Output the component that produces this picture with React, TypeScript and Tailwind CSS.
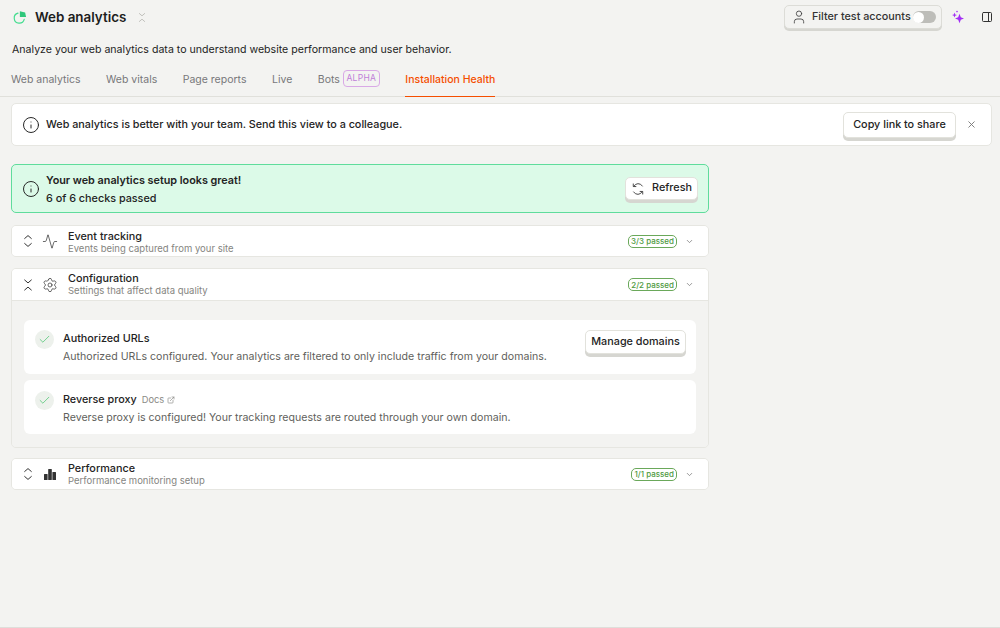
import { ExternalLink, Info, Settings, X, Check, ChevronDown, User, PanelRight, Activity } from "lucide-react";
import type { ReactNode } from "react";

const Chevrons = ({ open = false, className = "" }: { open?: boolean; className?: string }) => (
  <svg viewBox="0 0 12 16" className={className} fill="none" stroke="currentColor" strokeWidth="1.2" strokeLinecap="round" strokeLinejoin="round">
    {open ? (
      <>
        <path d="M2 2 6 5.5 10 2" />
        <path d="M2 14 6 10.5 10 14" />
      </>
    ) : (
      <>
        <path d="M2 5 6 1.5 10 5" />
        <path d="M2 11 6 14.5 10 11" />
      </>
    )}
  </svg>
);

const Logo = () => (
  <svg viewBox="0 0 16 16" className="w-[15px] h-[15px]" fill="none">
    <path d="M6.4 3.4A5.4 5.4 0 1 0 13 10" stroke="#45dd90" strokeWidth="1.3" strokeLinecap="round" />
    <path d="M8.4 1.4l5.6 1.2 1 4.8H8.4z" fill="#2fc77b" />
  </svg>
);

const Spark = () => (
  <svg viewBox="0 0 14 14" className="w-[14px] h-[14px]" fill="#a32ef5">
    <path d="M8.5 3.8 9.8 7.2 13 8.5 9.8 9.8 8.5 13.2 7.2 9.8 4 8.5 7.2 7.2z" />
    <path d="M3.5 2.6 4.2 4.4 6 5 4.2 5.7 3.5 7.4 2.8 5.7 1 5 2.8 4.4z" />
    <circle cx="6" cy="1.6" r="0.8" />
  </svg>
);

const Refresh = () => (
  <svg viewBox="0 0 16 16" className="w-[14px] h-[14px] text-[#444]" fill="none" stroke="currentColor" strokeWidth="1.1" strokeLinecap="round" strokeLinejoin="round">
    <path d="M3.2 5A5.6 5.6 0 0 1 13 4.6" />
    <path d="M12.8 11A5.6 5.6 0 0 1 3 11.4" />
    <path d="M2.6 2.2V5.2H5.6" />
    <path d="M13.4 13.8V10.8H10.4" />
  </svg>
);

const Bars = () => (
  <svg viewBox="0 0 14 14" className="w-[14px] h-[14px]" fill="#333">
    <rect x="1" y="7" width="3.6" height="6" rx="0.6" />
    <rect x="5.2" y="2" width="3.6" height="11" rx="0.6" />
    <rect x="9.4" y="5" width="3.6" height="8" rx="0.6" />
  </svg>
);

const SoftButton = ({ children, className = "" }: { children: ReactNode; className?: string }) => (
  <button className={"flex items-center justify-center bg-white rounded-[5px] border border-[#e2e2dc] shadow-[0_3px_0_#d6d6d1] text-[10.8px] font-medium text-[#232323] whitespace-nowrap " + className}>
    {children}
  </button>
);

const CheckDot = () => (
  <span className="w-[19px] h-[19px] shrink-0 rounded-full bg-[#edf1ec] flex items-center justify-center">
    <Check className="w-[13px] h-[13px] text-[#3fc267]" strokeWidth={1.3} />
  </span>
);

const Section = ({ icon, title, sub, passed, open, nudge, children }: { icon: ReactNode; title: string; sub: string; passed: string; open?: boolean; nudge?: boolean; children?: ReactNode }) => (
  <div className="rounded-[5px] border border-[#e6e6e1] overflow-hidden">
    <div className={open ? "flex items-center h-[32px] bg-white pl-[11px] pr-[14px] border-b border-[#e6e6e1]" : "flex items-center h-[30px] bg-white pl-[11px] pr-[14px]"}>
      <Chevrons open={open} className="w-[10px] h-[16px] text-[#333]" />
      <span className="w-[16px] flex justify-center ml-[9px] text-[#333]">{icon}</span>
      <div className={nudge ? "ml-[10px] pt-[2px] flex-1 flex flex-col" : open ? "ml-[10px] pb-[1px] flex-1 flex flex-col" : "ml-[10px] flex-1 flex flex-col"}>
        <span className="text-[10.8px] leading-[13px] font-medium text-[#232323]">{title}</span>
        <span className="text-[9.5px] leading-[11px] text-[#85857f]">{sub}</span>
      </div>
      <span className="border border-[#6aa85a] rounded-[5px] px-[2px] h-[13px] flex items-center text-[8px] font-medium text-[#4f9a42] whitespace-nowrap">{passed}</span>
      <ChevronDown className="w-[9px] h-[9px] ml-[8px] text-[#777]" />
    </div>
    {children}
  </div>
);

export default function App() {
  return (
    <div className="w-[1000px] h-[628px] overflow-hidden bg-[#f3f3f1] font-['Inter',sans-serif] text-[#232323] border-b border-[#dededa]">
      <div className="flex items-center h-[34px] pl-[12px] pr-[7px]">
        <Logo />
        <span className="ml-[8px] text-[13.4px] font-semibold text-[#1d1d1d]">Web analytics</span>
        <Chevrons open className="ml-[12px] w-[8px] h-[11px] text-[#b5b5b0]" />
        <div className="flex-1" />
        <div className="flex items-center h-[24px] w-[158px] pl-[6px] bg-[#f3f3f1] rounded-[5px] border border-[#dcdcd7] shadow-[0_2px_0_#d6d6d1]">
          <User className="w-[16px] h-[16px] text-[#444]" strokeWidth={1.3} />
          <span className="ml-[5px] pt-[1px] text-[10.8px] font-medium text-[#333] whitespace-nowrap">Filter test accounts</span>
          <span className="ml-[2px] w-[23px] h-[12px] rounded-full bg-[#bdbdb9] flex items-center">
            <span className="w-[11px] h-[11px] rounded-full bg-white" />
          </span>
        </div>
        <span className="ml-[9px]"><Spark /></span>
        <PanelRight className="ml-[16px] w-[12px] h-[12px] text-[#333]" />
      </div>
      <p className="mt-[7px] pl-[12px] text-[10.6px] leading-[18px] text-[#232323]">Analyze your web analytics data to understand website performance and user behavior.</p>
      <div className="mt-[8px] h-[30px] flex pl-[11px] gap-[25.5px] border-b border-[#e0e0db] text-[10.5px] text-[#77777a]">
        <span className="pt-[5px]">Web analytics</span>
        <span className="pt-[5px]">Web vitals</span>
        <span className="pt-[5px]">Page reports</span>
        <span className="pt-[5px]">Live</span>
        <span className="pt-[5px] flex items-start">
          Bots
          <span className="ml-[3px] mt-[-2px] border border-[#d9a9e6] rounded-[4px] w-[37px] justify-center h-[17px] flex items-center text-[8.5px] text-[#c07fd8] tracking-[0.3px]">ALPHA</span>
        </span>
        <span className="pt-[5px] h-[30px] border-b-[1.5px] border-[#f54e00] text-[#f54e00] font-medium">Installation Health</span>
      </div>
      <div className="px-[11px] pt-[6px]">
        <div className="w-[981px] h-[43px] flex items-center pl-[10px] pr-[14px] bg-white rounded-[5px] border border-[#e6e6e1]">
          <Info className="w-[18px] h-[18px] text-[#232323]" strokeWidth={1.3} />
          <span className="ml-[6px] pt-[1px] flex-1 text-[10.8px] font-medium">Web analytics is better with your team. Send this view to a colleague.</span>
          <SoftButton className="w-[113px] h-[26px] pt-[1px]">Copy link to share</SoftButton>
          <X className="ml-[10px] w-[11px] h-[11px] text-[#777]" />
        </div>
        <div className="mt-[18px] w-[698px] flex flex-col gap-[10px]">
          <div className="h-[49px] flex items-center pl-[10px] pr-[10px] rounded-[5px] border border-[#5fdc9c] bg-[#dcfae8]">
            <Info className="w-[18px] h-[18px] text-[#232323]" strokeWidth={1.3} />
            <div className="ml-[6px] pt-[2px] flex-1 text-[10.8px] leading-[18px]">
              <div className="font-semibold">Your web analytics setup looks great!</div>
              <div className="font-medium">6 of 6 checks passed</div>
            </div>
            <SoftButton className="w-[73px] h-[23px] gap-[7px]">
              <Refresh />
              Refresh
            </SoftButton>
          </div>
          <div className="mt-[2px] mb-[1px]">
            <Section nudge icon={<Activity className="w-[17px] h-[17px]" strokeWidth={1.1} />} title="Event tracking" sub="Events being captured from your site" passed="3/3 passed" />
          </div>
          <Section open icon={<Settings className="w-[16px] h-[16px]" strokeWidth={1.1} />} title="Configuration" sub="Settings that affect data quality" passed="2/2 passed">
            <div className="px-[12px] pt-[19px] pb-[13px] flex flex-col gap-[6px] bg-[#f3f3f1]">
              <div className="h-[54px] flex items-start pt-[10px] pl-[11px] pr-[11px] bg-white rounded-[6px]">
                <CheckDot />
                <div className="ml-[9px] flex-1">
                  <div className="text-[10.8px] leading-[18px] font-medium">Authorized URLs</div>
                  <div className="text-[10.6px] leading-[18px] text-[#5f5f5c]">Authorized URLs configured. Your analytics are filtered to only include traffic from your domains.</div>
                </div>
                <SoftButton className="w-[101px] h-[24px] -mr-[1px]">Manage domains</SoftButton>
              </div>
              <div className="h-[54px] flex items-start pt-[11px] pl-[11px] bg-white rounded-[6px]">
                <CheckDot />
                <div className="ml-[9px] flex-1">
                  <div className="flex items-center text-[10.8px] leading-[18px] font-medium">
                    Reverse proxy
                    <span className="ml-[5px] text-[9.3px] font-normal text-[#8a8a85]">Docs</span>
                    <ExternalLink className="ml-[3px] w-[8px] h-[8px] text-[#8a8a85]" />
                  </div>
                  <div className="text-[10.6px] leading-[18px] text-[#5f5f5c]">Reverse proxy is configured! Your tracking requests are routed through your own domain.</div>
                </div>
              </div>
            </div>
          </Section>
          <Section icon={<Bars />} title="Performance" sub="Performance monitoring setup" passed="1/1 passed" />
        </div>
      </div>
    </div>
  );
}
